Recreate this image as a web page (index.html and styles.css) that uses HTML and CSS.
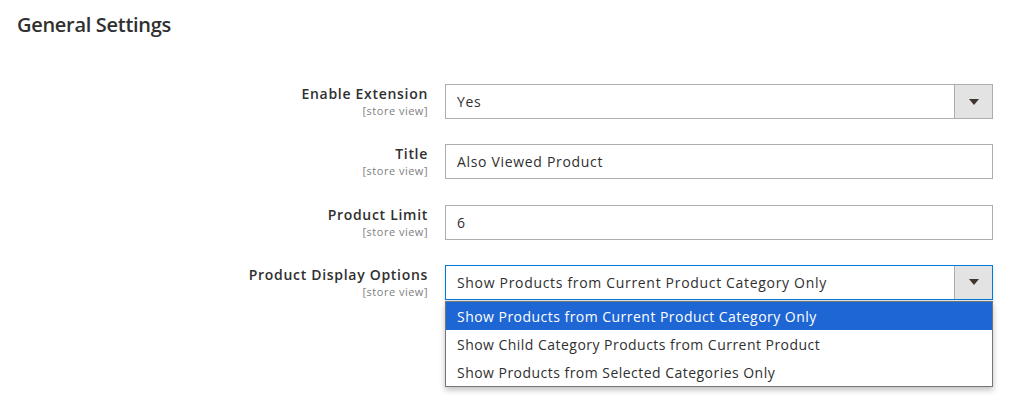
FILE: index.html
```html
<!DOCTYPE html>
<html lang="en">
<head>
    <meta charset="UTF-8">
    <meta name="viewport" content="width=device-width, initial-scale=1.0">
    <title>General Settings</title>
    <link rel="stylesheet" href="styles.css">
</head>
<body>

<div class="section">
    <h2 class="section-title">General Settings</h2>

    <div class="config-form">
        <div class="config-row">
            <label class="config-label" for="enableExtension">
                <span class="label-text">Enable Extension</span>
                <span class="scope">[store view]</span>
            </label>
            <div class="control">
                <div class="select" id="enableExtension">
                    <span class="select-value">Yes</span>
                    <span class="select-arrow"></span>
                </div>
            </div>
        </div>

        <div class="config-row">
            <label class="config-label" for="blockTitle">
                <span class="label-text">Title</span>
                <span class="scope">[store view]</span>
            </label>
            <div class="control">
                <input class="text-input" id="blockTitle" type="text" value="Also Viewed Product">
            </div>
        </div>

        <div class="config-row">
            <label class="config-label" for="productLimit">
                <span class="label-text">Product Limit</span>
                <span class="scope">[store view]</span>
            </label>
            <div class="control">
                <input class="text-input" id="productLimit" type="text" value="6">
            </div>
        </div>

        <div class="config-row">
            <label class="config-label" for="displayOptions">
                <span class="label-text">Product Display Options</span>
                <span class="scope">[store view]</span>
            </label>
            <div class="control">
                <div class="select is-open" id="displayOptions">
                    <span class="select-value">Show Products from Current Product Category Only</span>
                    <span class="select-arrow"></span>
                </div>
                <ul class="select-menu">
                    <li class="option is-active">Show Products from Current Product Category Only</li>
                    <li class="option">Show Child Category Products from Current Product</li>
                    <li class="option">Show Products from Selected Categories Only</li>
                </ul>
            </div>
        </div>
    </div>
</div>

</body>
</html>
```

FILE: styles.css
```css
body {
    font-family: "Open Sans", "Liberation Sans", Arial, sans-serif;
    margin: 0;
    min-height: 100vh;
    background-color: #fff;
    color: #303030;
}
.section {
    padding: 10px 21px 0 17px;
}
.section-title {
    margin: 0;
    font-size: 20px;
    font-weight: 600;
    line-height: 30px;
    letter-spacing: -0.3px;
    color: #303030;
}
.config-form {
    margin-top: 44px;
    margin-left: -17px;
}
.config-row {
    display: grid;
    grid-template-columns: 1fr 548px;
    column-gap: 17px;
    margin-bottom: 25.3px;
}
.config-label {
    display: flex;
    flex-direction: column;
    align-items: flex-end;
    text-align: right;
}
.label-text {
    font-size: 14px;
    font-weight: 600;
    line-height: 19px;
    letter-spacing: 0.7px;
    color: #303030;
}
.scope {
    font-size: 11px;
    line-height: 15px;
    letter-spacing: 0.5px;
    color: #808080;
}
.control {
    position: relative;
}
.text-input, .select {
    box-sizing: border-box;
    width: 100%;
    height: 35px;
    border: 1px solid #adadad;
    font-family: inherit;
    font-size: 14px;
    letter-spacing: 0.68px;
    color: #303030;
    background-color: #fff;
}
.text-input {
    display: block;
    padding: 0 11px;
    outline: none;
}
.select {
    display: flex;
    align-items: center;
    padding-left: 11px;
}
.select-value {
    flex: 1;
}
.select-arrow {
    align-self: stretch;
    width: 37px;
    border-left: 1px solid #adadad;
    background-color: #e3e3e3;
    display: flex;
    align-items: center;
    justify-content: center;
}
.select-arrow::after {
    content: "";
    border-left: 5px solid transparent;
    border-right: 5px solid transparent;
    border-top: 6px solid #41362f;
}
.select.is-open {
    border-color: #007bdb;
    box-shadow: 0 2px 4px rgba(0, 0, 0, 0.12);
}
/* open option list, drawn over the content below the select */
.select-menu {
    position: absolute;
    left: 0;
    right: 0;
    top: 36px;
    margin: 0;
    padding: 0;
    list-style: none;
    border: 1px solid #767676;
    background-color: #fff;
    box-shadow: 0 3px 6px rgba(0, 0, 0, 0.25);
    z-index: 2;
}
.option {
    box-sizing: border-box;
    height: 28px;
    padding: 2px 0 0 11px;
    line-height: 26px;
    font-size: 14px;
    letter-spacing: 0.47px;
    color: #303030;
}
.option.is-active {
    background-color: #1d66d4;
    color: #fff;
}
```
